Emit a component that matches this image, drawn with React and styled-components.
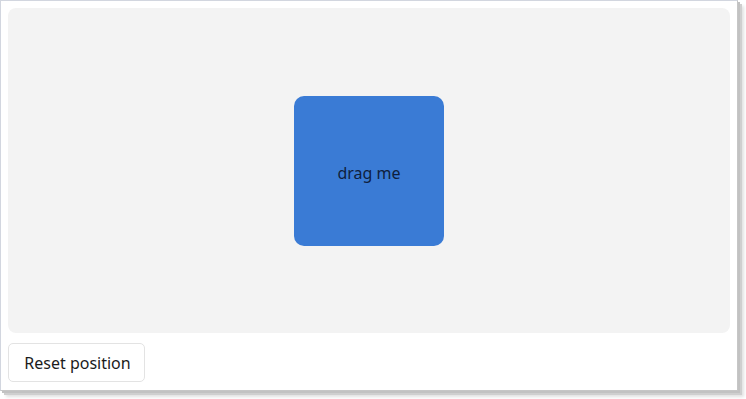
import React from "react";
import styled, { createGlobalStyle } from "styled-components";

const Global = createGlobalStyle`
  html, body { margin: 0; padding: 0; background: #ffffff; }
  body { min-height: 399px; }
  * { box-sizing: border-box; }
`;

const Page = styled.div`
  width: 746px;
  height: 399px;
  background: #ffffff;
`;

const Window = styled.div`
  width: 738px;
  height: 391px;
  background: #ffffff;
  border: 1px solid #d2d6df;
  border-right-color: #c6c6c6;
  border-bottom-color: #c6c6c6;
  box-shadow: 2px 2px 0 #c2c2c2, 4px 4px 0 #cfcfcf, 6px 6px 3px rgba(0, 0, 0, 0.12);
  padding: 7px 7px 8px 7px;
  display: flex;
  flex-direction: column;
  gap: 10px;
  font-family: "Noto Sans", "Open Sans", sans-serif;
`;

const Stage = styled.div`
  height: 325px;
  background: #f3f3f3;
  border-radius: 8px;
  display: flex;
  align-items: center;
  justify-content: center;
`;

const Draggable = styled.div`
  width: 150px;
  height: 150px;
  background: #3a7bd5;
  border-radius: 10px;
  display: flex;
  align-items: center;
  justify-content: center;
  padding-top: 5px;
  color: #0f1f3d;
  font-size: 16px;
  cursor: grab;
  user-select: none;
`;

const Footer = styled.div`
  display: flex;
`;

const Button = styled.button`
  height: 39px;
  width: 137px;
  padding: 0 0 0 2px;
  background: #ffffff;
  border: 1px solid #e3e3e3;
  border-radius: 5px;
  font-family: "Noto Sans", "Open Sans", sans-serif;
  font-size: 16px;
  color: #1b1b1b;
  cursor: pointer;
`;

export default function App() {
  return (
    <Page>
      <Global />
      <Window>
        <Stage>
          <Draggable>drag me</Draggable>
        </Stage>
        <Footer>
          <Button>Reset position</Button>
        </Footer>
      </Window>
    </Page>
  );
}
